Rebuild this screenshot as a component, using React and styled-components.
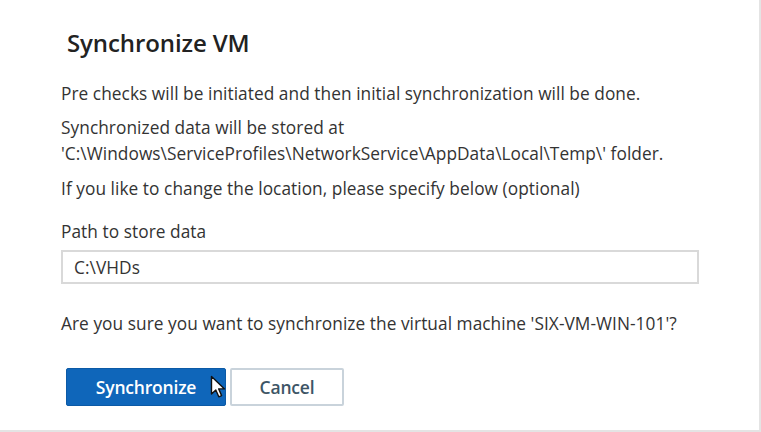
import React, { useState } from 'react';
import styled, { createGlobalStyle } from 'styled-components';

const GlobalStyle = createGlobalStyle`
	html, body {
		margin: 0;
		padding: 0;
		background: #ffffff;
	}
	body {
		font-family: 'Open Sans', 'Noto Sans', Arial, sans-serif;
		color: #2f2f2f;
	}
`;

const Dialog = styled.div`
	box-sizing: border-box;
	width: 761px;
	height: 432px;
	background: #ffffff;
	border-right: 2px solid #e4e4e4;
	border-bottom: 2px solid #e4e4e4;
	padding: 26px 0 0 61px;
	display: flex;
	flex-flow: column;
`;

const Title = styled.h2`
	margin: 0 0 0 6px;
	font-size: 24px;
	line-height: 34px;
	font-weight: 600;
	color: #222222;
	letter-spacing: -0.1px;
`;

const Text = styled.p`
	margin: ${p => p.$top || 0}px 0 0 0;
	font-size: 17.3px;
	line-height: 26px;
	letter-spacing: 0.05px;
	color: #333333;
`;

const Label = styled.label`
	margin-top: 17px;
	font-size: 17.3px;
	line-height: 26px;
	letter-spacing: 0.05px;
	color: #333333;
`;

const Input = styled.input`
	box-sizing: border-box;
	margin-top: 5px;
	width: 638px;
	height: 34px;
	border: 2px solid #d9d9d9;
	padding: 0 11px;
	font-family: inherit;
	font-size: 17.3px;
	letter-spacing: 0.05px;
	color: #333333;
	outline: none;
`;

const Actions = styled.div`
	display: flex;
	gap: 4px;
	margin: 31px 0 0 5px;
	position: relative;
`;

const Button = styled.button`
	box-sizing: border-box;
	height: 38px;
	width: ${p => p.$width}px;
	border-radius: 2px;
	font-family: inherit;
	font-size: 17.5px;
	font-weight: 600;
	letter-spacing: -0.2px;
	cursor: pointer;
	background: ${p => (p.$primary ? '#0f66ba' : '#ffffff')};
	color: ${p => (p.$primary ? '#ffffff' : '#3d5566')};
	border: ${p => (p.$primary ? '1px solid #0c5aa6' : '2px solid #c9d3db')};
`;

const Pointer = styled.svg`
	position: absolute;
	left: 144px;
	top: 7px;
	pointer-events: none;
`;

const App = () => {
	const [ path, setPath ] = useState('C:\\VHDs');

	return (
		<>
			<GlobalStyle />
			<Dialog>
				<Title>Synchronize VM</Title>
				<Text $top={21}>Pre checks will be initiated and then initial synchronization will be done.</Text>
				<Text $top={8}>
					Synchronized data will be stored at
					<br />
					'C:\Windows\ServiceProfiles\NetworkService\AppData\Local\Temp\' folder.
				</Text>
				<Text $top={9}>If you like to change the location, please specify below (optional)</Text>
				<Label htmlFor="path">Path to store data</Label>
				<Input id="path" value={path} onChange={e => setPath(e.target.value)} />
				<Text $top={27}>Are you sure you want to synchronize the virtual machine 'SIX-VM-WIN-101'?</Text>
				<Actions>
					<Button $primary $width={160}>Synchronize</Button>
					<Button $width={114}>Cancel</Button>
					<Pointer width="18" height="24" viewBox="0 0 18 24">
						<path d="M1.5 1.5 L1.5 19 L5.8 15 L8.8 21.8 L11.6 20.6 L8.7 13.9 L14.5 13.9 Z" fill="#ffffff" stroke="#111111" strokeWidth="1.4" strokeLinejoin="round" />
					</Pointer>
				</Actions>
			</Dialog>
		</>
	);
};

export default App;
